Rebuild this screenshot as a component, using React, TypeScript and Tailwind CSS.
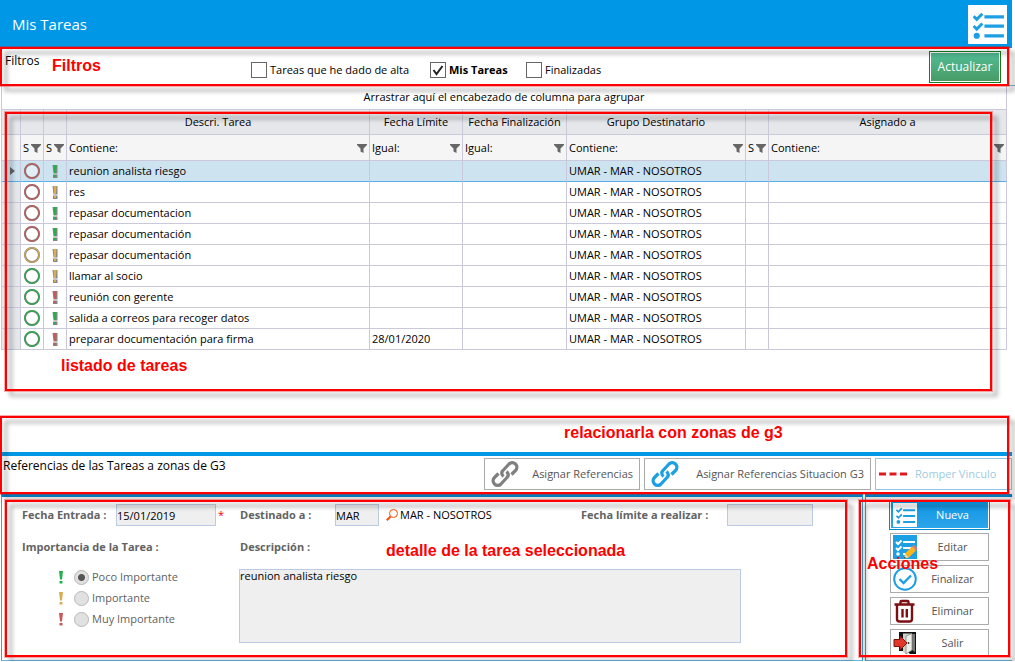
import type { ReactNode } from 'react';

type Level = 'green' | 'yellow' | 'red';

interface Task {
  status: Level;
  priority: Level;
  description: string;
  dueDate?: string;
}

const COLORS: Record<Level, string> = {
  green: '#22b14c',
  yellow: '#d9ad55',
  red: '#c85a5a',
};

const TASKS: Task[] = [
  { status: 'red', priority: 'green', description: 'reunion analista riesgo' },
  { status: 'red', priority: 'yellow', description: 'res' },
  { status: 'red', priority: 'green', description: 'repasar documentacion' },
  { status: 'red', priority: 'green', description: 'repasar documentación' },
  { status: 'yellow', priority: 'yellow', description: 'repasar documentación' },
  { status: 'green', priority: 'yellow', description: 'llamar al socio' },
  { status: 'green', priority: 'red', description: 'reunión con gerente' },
  { status: 'green', priority: 'green', description: 'salida a correos para recoger datos' },
  { status: 'green', priority: 'red', description: 'preparar documentación para firma', dueDate: '28/01/2020' },
];

const COLUMNS = [
  { title: '', filter: 'S' },
  { title: '', filter: 'S' },
  { title: 'Descri. Tarea', filter: 'Contiene:' },
  { title: 'Fecha Límite', filter: 'Igual:' },
  { title: 'Fecha Finalización', filter: 'Igual:' },
  { title: 'Grupo Destinatario', filter: 'Contiene:' },
  { title: '', filter: 'S' },
  { title: 'Asignado a', filter: 'Contiene:' },
];

function Frame({ className }: { className: string }) {
  return (
    <div
      className={`absolute pointer-events-none z-10 border-2 border-[#ff0000] outline outline-1 outline-[#ff000055] drop-shadow-[5px_5px_2px_rgba(0,0,0,0.35)] ${className}`}
    />
  );
}

function Note({ className, children }: { className: string; children: ReactNode }) {
  return (
    <span
      className={`absolute pointer-events-none z-20 whitespace-nowrap font-['Liberation_Sans',sans-serif] text-base leading-5 font-bold text-[#ff0000] ${className}`}
    >
      {children}
    </span>
  );
}

function ListIcon({ className, bg, fg }: { className: string; bg: string; fg: string }) {
  return (
    <svg viewBox="0 0 38 38" className={className}>
      <rect width="38" height="38" fill={bg} />
      <g stroke={fg} strokeWidth="3.2" fill="none">
        <path d="M16 11.5h19M16 20.5h19M16 30h19" />
        <path d="M5.5 11l3 3 5.5-5.5M5.5 20.5l3 3 5.5-5.5" strokeWidth="2.8" />
      </g>
      <circle cx="8.5" cy="30" r="3" fill={fg} />
    </svg>
  );
}

function FunnelIcon() {
  return (
    <svg viewBox="0 0 10 10" className="w-[10px] h-[10px]">
      <path d="M0 1h10v1L6.5 5.5V10l-3-1.500V5.500L0 2z" fill="#666" />
    </svg>
  );
}

function PriorityIcon({ level, shaded }: { level: Level; shaded?: boolean }) {
  return (
    <svg viewBox="0 0 6 13" className="w-[6px] h-[13px] shrink-0">
      {shaded && <path d="M.5 0h5v8.500h-4zM1 9.500h4.500V13H1z" fill="#858585" />}
      <path d={shaded ? 'M1.5 0h3L4 8H2zM2 10h2v2H2z' : 'M1 0h4L4 8.500H2zM1.500 10h3v2.500h-3z'} fill={COLORS[level]} />
    </svg>
  );
}

function StatusIcon({ level }: { level: Level }) {
  return (
    <svg viewBox="0 0 16 16" className="w-4 h-4 mx-auto">
      <circle cx="8" cy="8" r="7" fill="#fff" fillOpacity=".4" stroke="#777" strokeWidth="2" />
      <circle cx="8" cy="8" r="7.2" fill="none" stroke={COLORS[level]} strokeWidth="1.2" />
    </svg>
  );
}

function LinkIcon({ color }: { color: string }) {
  return (
    <svg viewBox="0 0 28 28" className="w-7 h-7 shrink-0" fill="none" stroke={color} strokeWidth="3.2">
      <path d="M12.5 16.5c-2.5-2.5-2-4.5-.5-6L18 4c1.800-1.800 4.500-2 6.500 0s1.800 4.700 0 6.500l-4 4" />
      <path d="M15.5 11.5c2.5 2.5 2 4.5.5 6L10 24c-1.800 1.800-4.500 2-6.500 0s-1.800-4.700 0-6.500l4-4" />
    </svg>
  );
}

function EditIcon() {
  return (
    <svg viewBox="0 0 24 24" className="w-6 h-6">
      <rect width="24" height="24" fill="#1d9fe3" />
      <g stroke="#fff" strokeWidth="2" fill="none">
        <path d="M10 7h12M10 13h12M10 19h6M3 7l2 2 3.5-3.5M3 13l2 2 3.5-3.5" />
      </g>
      <circle cx="5" cy="19" r="1.8" fill="#fff" />
      <path d="M11 23.5l1-5 4 4z" fill="#f3d9a8" />
      <path d="M11 23.5l.4-2 1.600 1.600z" fill="#333" />
      <path d="M12 18.500l7-7 4 4-7 7z" fill="#f9b51c" />
      <path d="M19 11.500l1.500-1.500q3 .5 4 4l-1.500 1.500z" fill="#d97878" />
    </svg>
  );
}

function DoneIcon() {
  return (
    <svg viewBox="0 0 24 24" className="w-6 h-6" fill="none" stroke="#1d9fe3">
      <circle cx="12" cy="12" r="10.8" strokeWidth="2" />
      <path d="M6.5 12l4 4 7.5-7.5" strokeWidth="2.4" />
    </svg>
  );
}

function TrashIcon() {
  return (
    <svg viewBox="0 0 24 24" className="w-6 h-6" fill="none" stroke="#7d0f14" strokeWidth="2.4">
      <path d="M1.500 5.500h20M7.500 5V3q0-1 1-1h6q1 0 1 1v2M4 6v14q0 2.500 2.500 2.500h10Q19 22.500 19 20V6M9.500 10v8.500M13.800 10v8.500" />
    </svg>
  );
}

function ExitIcon() {
  return (
    <svg viewBox="0 0 24 24" className="w-6 h-6">
      <path d="M6 1h17v22h-6l-3-3H6z" fill="#111" />
      <path d="M19 3h3v18l-3-2z" fill="#777" />
      <path d="M10 2.500h9V19l-6 4-3-2z" fill="#d0d4cc" />
      <path d="M13 5l6-2.500V19l-6 4z" fill="#eceee8" stroke="#666" strokeWidth=".6" />
      <circle cx="15.500" cy="12" r="1" fill="#333" />
      <path d="M1 8.500h6V5l7 7-7 7v-3.500H1z" fill="#e0392b" stroke="#7a1510" />
    </svg>
  );
}

function CheckOption({ label, checked, className }: { label: string; checked?: boolean; className: string }) {
  return (
    <label className={`flex items-center gap-[3px] pt-[6px] whitespace-nowrap text-[11px] ${className}`}>
      <span className="grid place-items-center">
        <input
          type="checkbox"
          defaultChecked={checked}
          className="peer col-start-1 row-start-1 appearance-none w-4 h-4 border border-[#666] bg-white"
        />
        <svg viewBox="0 0 16 16" className="col-start-1 row-start-1 w-4 h-4 invisible peer-checked:visible pointer-events-none">
          <path d="M3.500 8l3 4L12.500 4" fill="none" stroke="#222" strokeWidth="2" />
        </svg>
      </span>
      <span>{label}</span>
    </label>
  );
}

function TaskTable() {
  return (
    <table className="w-full table-fixed border-separate border-spacing-0 border-l border-[#c9c9db] text-[11px] leading-4">
      <colgroup>
        <col className="w-[19px]" />
        <col className="w-[23px]" />
        <col className="w-[23px]" />
        <col className="w-[303px]" />
        <col className="w-[93px]" />
        <col className="w-[104px]" />
        <col className="w-[179px]" />
        <col className="w-[23px]" />
        <col />
      </colgroup>
      <thead>
        <tr className="h-[25px] bg-[#e6e7eb]">
          <th className="border-r border-b border-[#c9c9db] p-0" />
          {COLUMNS.map((col, i) => (
            <th key={i} className="border-r border-b border-[#c9c9db] p-0 font-normal">
              {col.title}
            </th>
          ))}
        </tr>
        <tr className="h-[26px] bg-[#f5f5f5]">
          <th className="border-r border-b border-[#c9c9db] p-0" />
          {COLUMNS.map((col, i) => (
            <th key={i} className="border-r border-b border-[#c9c9db] py-0 pl-[2px] pr-[2px] font-normal">
              <div className="flex items-center justify-between">
                <span>{col.filter}</span>
                <button aria-label="Filtrar">
                  <FunnelIcon />
                </button>
              </div>
            </th>
          ))}
        </tr>
      </thead>
      <tbody>
        {TASKS.map((task, i) => {
          const selected = i === 0;
          const cell = selected
            ? 'border-r border-b border-r-[#c9c9db] border-b-[#5aaee8] bg-[#cde3f0] p-0'
            : 'border-r border-b border-[#c9c9db] p-0';
          return (
            <tr key={i} className="h-[21px]">
              <td className={selected ? cell : `${cell} bg-[#e6e7eb]`}>
                {selected && (
                  <svg viewBox="0 0 5 8" className="w-[5px] h-2 ml-2">
                    <path d="M0 0l5 4-5 4z" fill="#666" />
                  </svg>
                )}
              </td>
              <td className={cell}>
                <StatusIcon level={task.status} />
              </td>
              <td className={cell}>
                <div className="flex justify-center">
                  <PriorityIcon level={task.priority} shaded />
                </div>
              </td>
              <td className={cell}>
                <span className="pl-[2px]">{task.description}</span>
              </td>
              <td className={cell}>
                <span className="pl-[2px]">{task.dueDate}</span>
              </td>
              <td className={cell} />
              <td className={cell}>
                <span className="pl-[2px]">UMAR - MAR - NOSOTROS</span>
              </td>
              <td className={cell} />
              <td className={cell} />
            </tr>
          );
        })}
      </tbody>
    </table>
  );
}

function PriorityOption({ label, level, checked }: { label: string; level: Level; checked?: boolean }) {
  return (
    <label className="flex items-center h-5 pl-9 text-[11px] text-[#5f5f5f]">
      <PriorityIcon level={level} />
      <input
        type="radio"
        name="importancia"
        defaultChecked={checked}
        className="appearance-none ml-[10px] mr-[3px] w-[15px] h-[15px] rounded-full border border-[#b8b8b8] bg-[#e1e1e1] checked:bg-[radial-gradient(circle,#555_3px,#e1e1e1_4px)]"
      />
      {label}
    </label>
  );
}

function ActionButton({ icon, label }: { icon: ReactNode; label: string }) {
  return (
    <button className="flex items-center w-full h-7 pl-[2px] border border-[#ababab] bg-white text-[11px] text-[#555]">
      {icon}
      <span className="flex-1 text-center">{label}</span>
    </button>
  );
}

export default function App() {
  const field = 'h-[22px] border border-[#bccbe3] bg-[#efefef] text-[11px] text-black';
  const caption = 'shrink-0 whitespace-nowrap text-[11px] font-bold text-[#636363]';

  return (
    <main className="bg-white font-['Open_Sans',sans-serif] text-black leading-4">
      <header className="flex items-center justify-between h-12 mr-[3px] pl-3 pr-[5px] bg-[#0097e6]">
        <h1 className="text-[15px] text-white">Mis Tareas</h1>
        <ListIcon className="w-[39px] h-[39px]" bg="#fff" fg="#1d9fe3" />
      </header>

      <section className="relative flex items-center h-[38px] pl-[5px] pr-[14px] border-b border-[#6db9e4]">
        <h2 className="self-start w-[246px] shrink-0 pt-[5px] text-xs">Filtros</h2>
        <CheckOption label="Tareas que he dado de alta" className="w-[179px]" />
        <CheckOption label="Mis Tareas" checked className="w-24 font-bold" />
        <CheckOption label="Finalizadas" className="" />
        <button className="ml-auto w-[72px] h-8 border border-[#1c7a1c] bg-linear-to-b from-[#52bd97] to-[#489a63] text-xs text-white shadow-[inset_0_0_0_1px_#fff]">
          Actualizar
        </button>
        <Frame className="left-0 right-[6px] -top-px -bottom-px" />
        <Note className="left-[52px] top-2">Filtros</Note>
      </section>

      <section className="relative h-[366px]">
        <div className="ml-px mr-2">
          <p className="h-6 pt-[3px] border-x border-b border-[#c9c9db] text-center text-[11px]">
            Arrastrar aquí el encabezado de columna para agrupar
          </p>
          <TaskTable />
        </div>
        <Frame className="left-[5px] right-[23px] top-[26px] bottom-[61px]" />
        <Note className="left-[61px] top-[270px]">listado de tareas</Note>
        <Note className="left-[564px] bottom-[9px]">relacionarla con zonas de g3</Note>
      </section>

      <section className="relative flex h-[42px] mr-[3px] ml-px border-t-4 border-[#0097e6]">
        <h2 className="flex-1 pl-[2px] pt-[2px] text-xs">Referencias de las Tareas a zonas de G3</h2>
        <div className="flex gap-1 h-[34px] pt-[2px] text-[11px] text-[#555]">
          <button className="flex items-center justify-between w-[156px] px-[6px] border border-[#ababab]">
            <LinkIcon color="#808080" />
            Asignar Referencias
          </button>
          <button className="flex items-center justify-between w-[227px] px-[6px] border border-[#ababab]">
            <LinkIcon color="#1d9fe3" />
            Asignar Referencias Situacion G3
          </button>
          <button disabled className="flex items-center gap-2 w-[137px] pl-[3px] border border-[#8fc5de] text-[#9ccbe0]">
            <svg viewBox="0 0 28 4" className="w-7 h-1">
              <path d="M0 2h28" stroke="#e3181f" strokeWidth="3" strokeDasharray="7 3.500" />
            </svg>
            Romper Vinculo
          </button>
        </div>
        <Frame className="-left-px right-[3px] -top-10 bottom-0" />
      </section>

      <div className="flex gap-[2px] ml-px mr-[3px]">
        <section className="relative flex-1 border-t-[3px] border-t-[#0088cf] border-l border-r border-b border-x-[#38a0d8] border-b-[#6db9e4]">
          <div className="flex items-center pl-5 pt-[3px] h-[33px]">
            <label htmlFor="entrada" className={`${caption} w-[94px]`}>Fecha Entrada :</label>
            <input id="entrada" readOnly value="15/01/2019" className={`${field} w-[100px]`} />
            <span className="w-6 pl-[2px] text-[11px] text-red-600">*</span>
            <label htmlFor="destino" className={`${caption} w-[95px]`}>Destinado a :</label>
            <input id="destino" readOnly value="MAR" className={`${field} w-[44px]`} />
            <svg viewBox="0 0 12 12" className="w-3 h-3 ml-[7px] mr-[2px] shrink-0" fill="none" stroke="#f0520f">
              <circle cx="7.5" cy="4.5" r="4" />
              <path d="M4.500 7.500L.8 11.300" strokeWidth="2" />
            </svg>
            <span className="w-[181px] shrink-0 text-[11px]">MAR - NOSOTROS</span>
            <label htmlFor="limite" className={`${caption} w-[146px]`}>Fecha límite a realizar :</label>
            <input id="limite" readOnly className={`${field} w-[86px]`} />
          </div>
          <div className="flex pl-5 pb-[17px]">
            <fieldset className="w-[217px]">
              <legend className={`${caption} h-8 pt-[9px]`}>Importancia de la Tarea :</legend>
              <div className="flex flex-col gap-px pt-[5px]">
                <PriorityOption label="Poco Importante" level="green" checked />
                <PriorityOption label="Importante" level="yellow" />
                <PriorityOption label="Muy Importante" level="red" />
              </div>
            </fieldset>
            <div className="flex flex-col">
              <label htmlFor="descripcion" className={`${caption} h-8 pt-[9px] pl-px`}>Descripción :</label>
              <textarea
                id="descripcion"
                readOnly
                value="reunion analista riesgo"
                className="mt-[7px] w-[502px] h-[74px] resize-none border border-[#bccbe3] bg-[#efefef] text-[11px] leading-3 text-black"
              />
            </div>
          </div>
          <Frame className="left-[3px] right-[15px] top-[3px] bottom-[3px]" />
          <Note className="left-[384px] top-[44px]">detalle de la tarea seleccionada</Note>
        </section>

        <aside className="relative w-[147px] border-t-[3px] border-t-[#0088cf] border-l border-b border-l-[#38a0d8] border-b-[#6db9e4]">
          <div className="flex flex-col gap-1 pt-1 pl-6 pr-[23px]">
            <button className="flex items-center w-full h-7 pl-[2px] border border-white bg-linear-to-b from-[#0d96e2] to-[#2ba5ec] text-[11px] text-white outline outline-1 outline-[#0088cf]">
              <ListIcon className="w-6 h-6" bg="#fff" fg="#1d9fe3" />
              <span className="flex-1 text-center">Nueva</span>
            </button>
            <ActionButton icon={<EditIcon />} label="Editar" />
            <ActionButton icon={<DoneIcon />} label="Finalizar" />
            <ActionButton icon={<TrashIcon />} label="Eliminar" />
            <ActionButton icon={<ExitIcon />} label="Salir" />
          </div>
          <Frame className="-left-[7px] right-[2px] top-[3px] bottom-[3px]" />
          <Note className="left-[1px] top-[57px]">Acciones</Note>
        </aside>
      </div>
    </main>
  );
}
